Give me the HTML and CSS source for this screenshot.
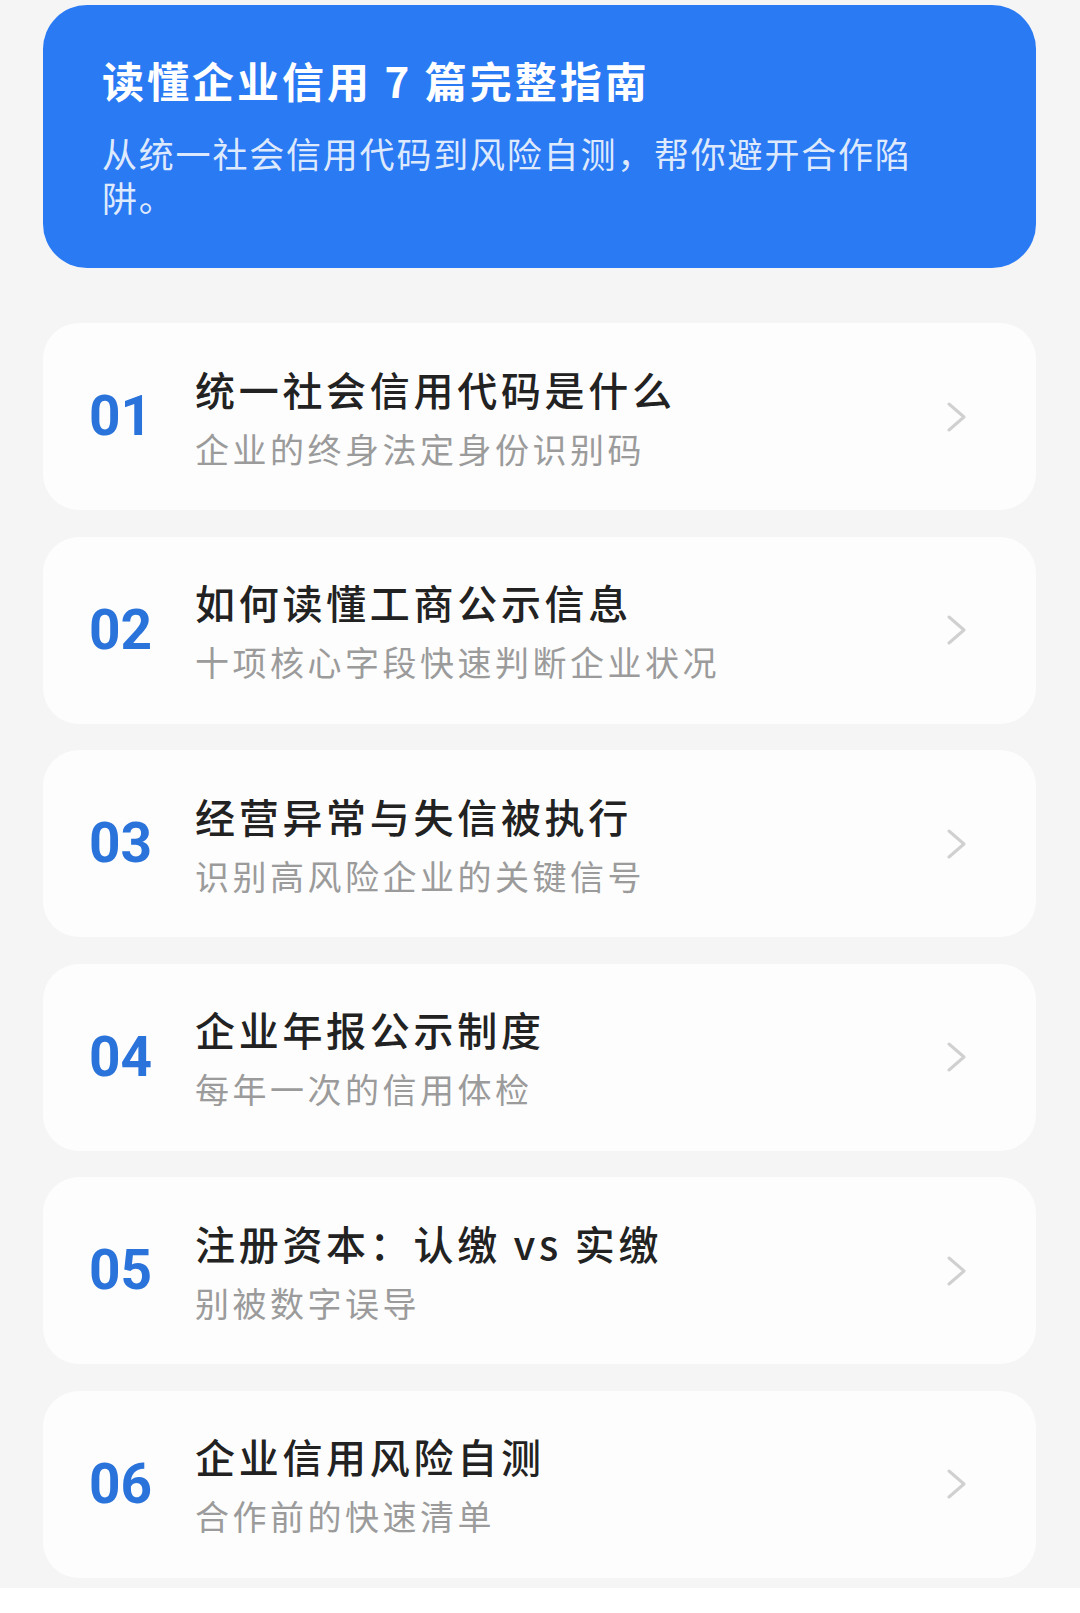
FILE: index.html
```html
<!DOCTYPE html>
<html lang="zh-CN">
<head>
<meta charset="utf-8">
<title>读懂企业信用 7 篇完整指南</title>
<link rel="stylesheet" href="styles.css">
</head>
<body>
<div class="page">
  <header class="hero">
    <h1 class="hero-title">读懂企业信用 7 篇完整指南</h1>
    <p class="hero-sub">从统一社会信用代码到风险自测，帮你避开合作陷阱。</p>
  </header>

  <ul class="list">
    <li class="card">
      <span class="num">01</span>
      <div class="text">
        <div class="title">统一社会信用代码是什么</div>
        <div class="sub">企业的终身法定身份识别码</div>
      </div>
      <svg class="chev" viewBox="0 0 20 30" width="20" height="30"><polyline points="2,2 17,15 2,28"/></svg>
    </li>
    <li class="card">
      <span class="num">02</span>
      <div class="text">
        <div class="title">如何读懂工商公示信息</div>
        <div class="sub">十项核心字段快速判断企业状况</div>
      </div>
      <svg class="chev" viewBox="0 0 20 30" width="20" height="30"><polyline points="2,2 17,15 2,28"/></svg>
    </li>
    <li class="card">
      <span class="num">03</span>
      <div class="text">
        <div class="title">经营异常与失信被执行</div>
        <div class="sub">识别高风险企业的关键信号</div>
      </div>
      <svg class="chev" viewBox="0 0 20 30" width="20" height="30"><polyline points="2,2 17,15 2,28"/></svg>
    </li>
    <li class="card">
      <span class="num">04</span>
      <div class="text">
        <div class="title">企业年报公示制度</div>
        <div class="sub">每年一次的信用体检</div>
      </div>
      <svg class="chev" viewBox="0 0 20 30" width="20" height="30"><polyline points="2,2 17,15 2,28"/></svg>
    </li>
    <li class="card">
      <span class="num">05</span>
      <div class="text">
        <div class="title">注册资本：认缴 vs 实缴</div>
        <div class="sub">别被数字误导</div>
      </div>
      <svg class="chev" viewBox="0 0 20 30" width="20" height="30"><polyline points="2,2 17,15 2,28"/></svg>
    </li>
    <li class="card">
      <span class="num">06</span>
      <div class="text">
        <div class="title">企业信用风险自测</div>
        <div class="sub">合作前的快速清单</div>
      </div>
      <svg class="chev" viewBox="0 0 20 30" width="20" height="30"><polyline points="2,2 17,15 2,28"/></svg>
    </li>
  </ul>
  <div class="bottom-bar"></div>
</div>
</body>
</html>
```

FILE: styles.css
```css
* { box-sizing: border-box; }

html, body {
  margin: 0;
  padding: 0;
  background: #f5f5f5;
}

body {
  width: 1080px;
  height: 1613px;
  overflow: hidden;
  font-family: "Noto Sans CJK SC", "Noto Sans", sans-serif;
}

.page {
  display: flex;
  flex-direction: column;
  padding-top: 5px;
  height: 1613px;
}

.hero {
  margin: 0 44px 0 43px;
  height: 263px;
  background: #2a7af4;
  border-radius: 44px;
  padding: 47px 90px 0 59px;
  color: #ffffff;
}

.hero-title {
  margin: 0;
  font-size: 42px;
  line-height: 56px;
  font-weight: 700;
  letter-spacing: 3px;
}

.hero-sub {
  margin: 23px 0 0 0;
  font-size: 35px;
  line-height: 44px;
  font-weight: 400;
  letter-spacing: 1.8px;
  color: rgba(255, 255, 255, 0.86);
}

.list {
  list-style: none;
  margin: 55px 44px 0 43px;
  padding: 0;
  display: flex;
  flex-direction: column;
  gap: 26.5px;
}

.card {
  height: 187px;
  background: #fdfdfd;
  border-radius: 36px;
  display: flex;
  align-items: center;
  padding: 0 69px 0 46px;
}

.num {
  flex: 0 0 106px;
  font-family: Roboto, "Liberation Sans", sans-serif;
  font-weight: 700;
  font-size: 55px;
  line-height: 1;
  color: #2a73da;
}

.text {
  flex: 1;
  padding-top: 2px;
  min-width: 0;
}

.title {
  font-size: 40px;
  line-height: 50px;
  font-weight: 500;
  letter-spacing: 3.7px;
  color: #222222;
  white-space: nowrap;
}

.sub {
  margin-top: 12px;
  font-size: 34px;
  line-height: 46px;
  font-weight: 400;
  letter-spacing: 3.5px;
  color: #9b9b9b;
  white-space: nowrap;
}

.chev {
  flex: 0 0 auto;
  display: block;
}

.chev polyline {
  fill: none;
  stroke: #d0d0d0;
  stroke-width: 3;
  stroke-linecap: round;
  stroke-linejoin: round;
}

.bottom-bar {
  margin-top: 10px;
  flex: 1;
  background: #ffffff;
}
```
